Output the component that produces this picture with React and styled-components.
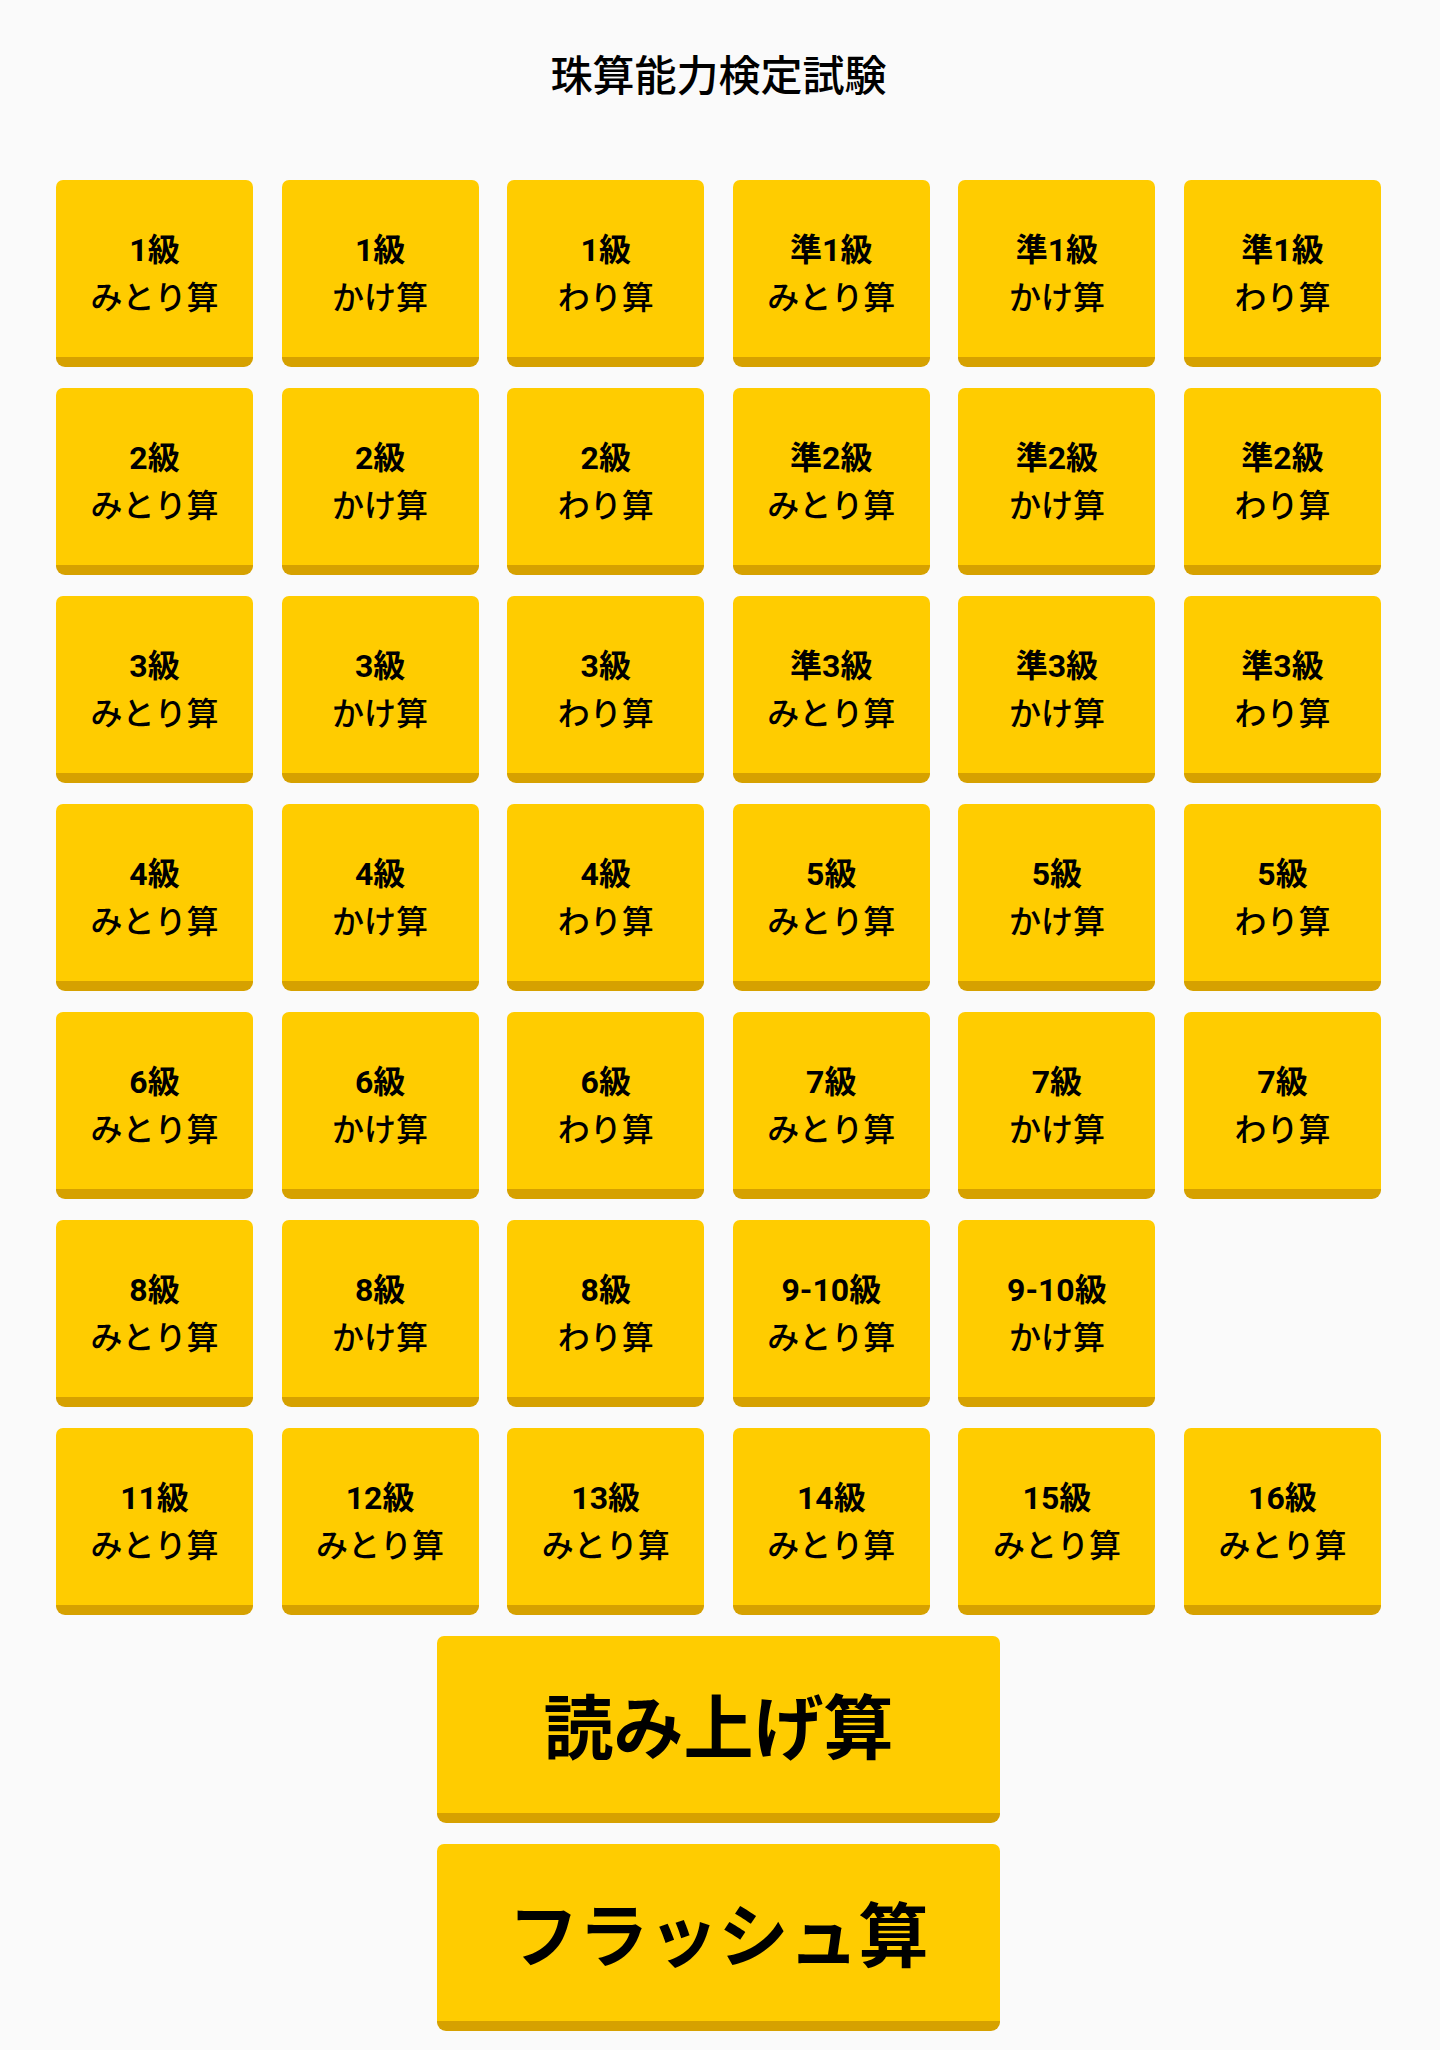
import styled, { createGlobalStyle } from "styled-components";

const GlobalStyle = createGlobalStyle`
  html, body {
    margin: 0;
    padding: 0;
    background: #fafafa;
  }
  body {
    font-family: "Roboto", "Noto Sans CJK JP", sans-serif;
    color: #000;
  }
`;

const Page = styled.div`
  display: flex;
  flex-direction: column;
  align-items: center;
  padding: 52px 3px 24px 0;
`;

const Title = styled.h1`
  margin: 0 0 78px;
  font-size: 42px;
  line-height: 50px;
  font-weight: 500;
`;

const Grid = styled.div`
  display: grid;
  grid-template-columns: repeat(6, 197px);
  column-gap: 28.6px;
  row-gap: 21px;
`;

const Key = styled.button`
  display: flex;
  flex-direction: column;
  align-items: center;
  justify-content: center;
  box-sizing: border-box;
  width: ${({ $wide }) => ($wide ? "563px" : "197px")};
  height: 187px;
  padding: 10px 0 0;
  margin: 0;
  border: none;
  border-bottom: 10px solid #d6a100;
  border-radius: 7px 7px 9px 9px;
  background: #ffcc00;
  font-family: inherit;
  color: #000;
  cursor: pointer;
`;

const Grade = styled.span`
  font-size: 32px;
  line-height: 48px;
  font-weight: 700;
`;

const Kind = styled.span`
  font-size: 32px;
  line-height: 48px;
  font-weight: 500;
`;

const BigLabel = styled.span`
  font-size: 70px;
  line-height: 80px;
  font-weight: 700;
`;

const Specials = styled.div`
  display: flex;
  flex-direction: column;
  gap: 21px;
  margin-top: 21px;
`;

const kinds = ["みとり算", "かけ算", "わり算"];

const rows = [
  ["1級", "準1級"],
  ["2級", "準2級"],
  ["3級", "準3級"],
  ["4級", "5級"],
  ["6級", "7級"],
];

const keys = [];
rows.forEach(([a, b]) => {
  kinds.forEach((k) => keys.push([a, k]));
  kinds.forEach((k) => keys.push([b, k]));
});
kinds.forEach((k) => keys.push(["8級", k]));
keys.push(["9-10級", "みとり算"]);
keys.push(["9-10級", "かけ算"]);
keys.push(null);
["11級", "12級", "13級", "14級", "15級", "16級"].forEach((g) =>
  keys.push([g, "みとり算"])
);

export default function App() {
  return (
    <>
      <GlobalStyle />
      <Page>
        <Title>珠算能力検定試験</Title>
        <Grid>
          {keys.map((item, i) =>
            item ? (
              <Key key={i}>
                <Grade>{item[0]}</Grade>
                <Kind>{item[1]}</Kind>
              </Key>
            ) : (
              <div key={i} />
            )
          )}
        </Grid>
        <Specials>
          <Key $wide>
            <BigLabel>読み上げ算</BigLabel>
          </Key>
          <Key $wide>
            <BigLabel>フラッシュ算</BigLabel>
          </Key>
        </Specials>
      </Page>
    </>
  );
}
